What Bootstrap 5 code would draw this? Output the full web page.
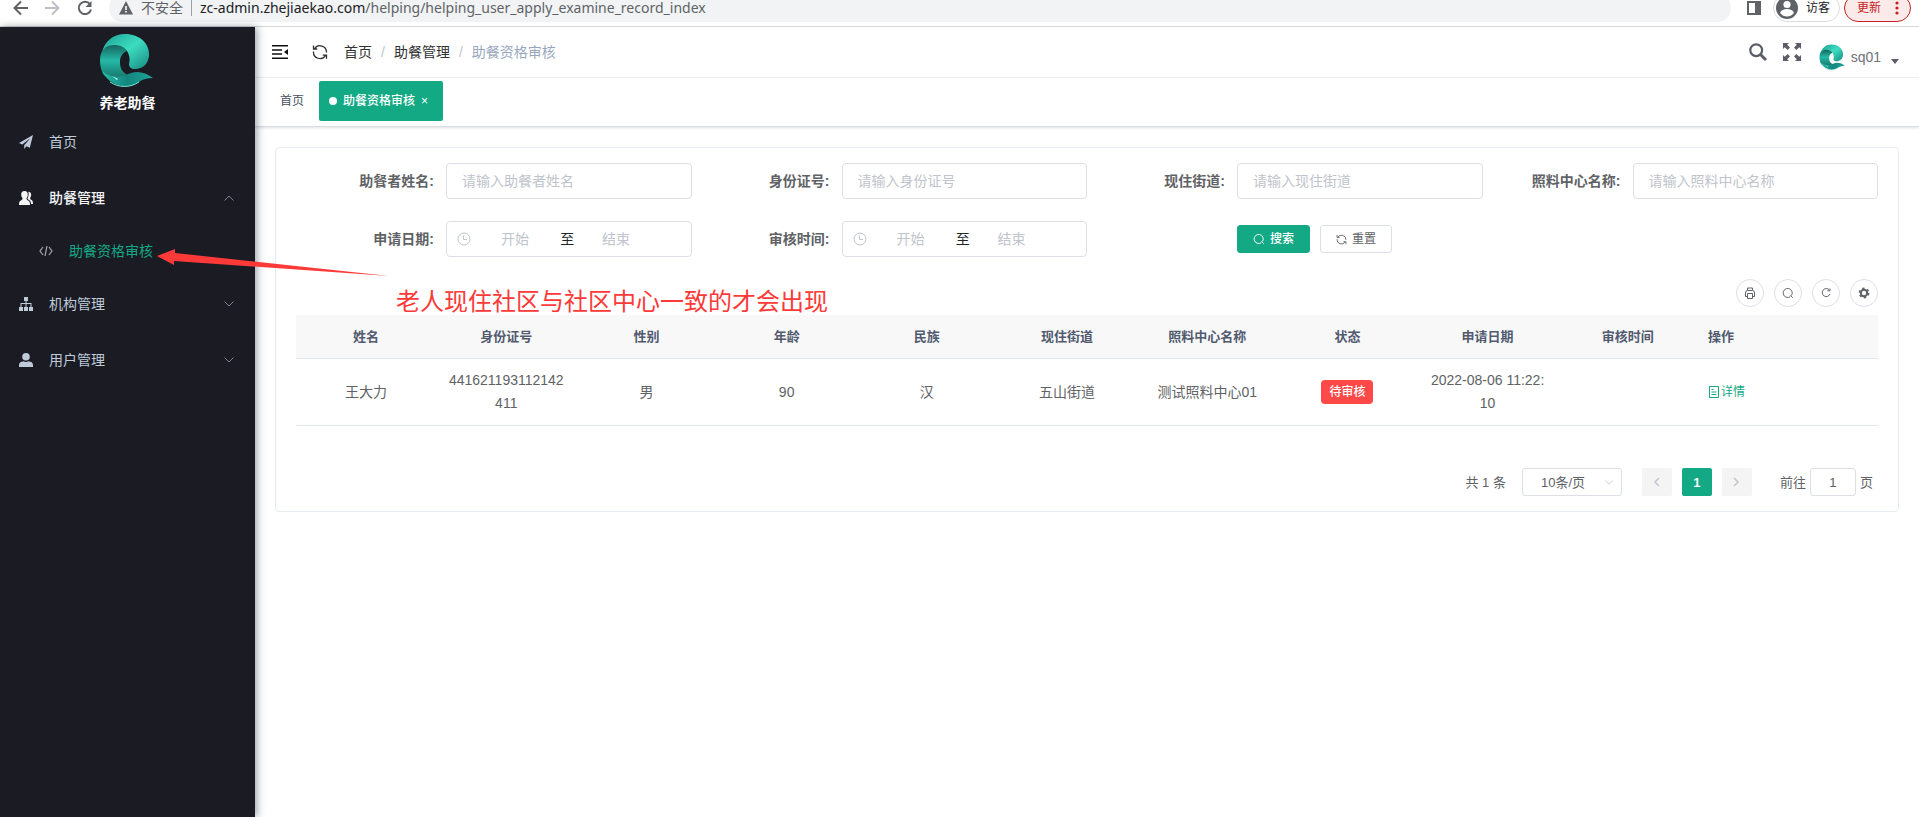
<!DOCTYPE html>
<html lang="zh-CN">
<head>
<meta charset="utf-8">
<meta name="viewport" content="width=device-width, initial-scale=1">
<title>助餐资格审核</title>
<link rel="stylesheet" href="https://cdn.jsdelivr.net/npm/bootstrap@5.3.0/dist/css/bootstrap.min.css">
<style>
:root { --brand: #13a985; --txt: #606266; --line: #dcdfe6; --soft: #e6ebf5; --ph: #c0c4cc; }
body { font-family: "Liberation Sans", "Noto Sans CJK SC", sans-serif; font-size: 14px; line-height: 23px; color: var(--txt); background: #fff; }
a { color: inherit; text-decoration: none; }
svg { display: block; flex: none; }
button { line-height: 1; }

/* browser toolbar */
.chrome { height: 27px; border-bottom: 1px solid #d5d6d8; overflow: hidden; }
.chrome-row { height: 28px; margin-top: -6px; padding: 0 8px 0 13px; }
.omni { height: 28px; border-radius: 14px; background: #f1f3f4; font-family: "Noto Sans", "Noto Sans CJK SC", sans-serif; font-size: 14px; line-height: 14px; padding-left: 10px; color: #5f6368; }
.omni b { font-weight: 400; color: #202124; }
.omni-sep { width: 1px; height: 16px; background: #9aa0a6; }
.chip { height: 28px; border-radius: 14px; border: 1px solid #dadce0; font-size: 12px; color: #202124; background: #fff; white-space: nowrap; padding: 0 9px 0 2px; gap: 8px; }
.chip-red { border-color: #c5221f; background: #fbeaea; color: #c5221f; padding: 0 11px 0 12px; gap: 14px; }

/* sidebar */
.side { width: 255px; background: #1b1b24; color: #bfcbd9; box-shadow: 2px 0 8px rgba(0,21,41,.4); z-index: 2; }
.side-brand { padding-top: 6px; gap: 5px; }
.side-title { font-weight: 700; color: #fff; line-height: 22px; }
.side a { height: 56px; padding: 0 20px 0 19px; gap: 16px; }
.side a.is-open { color: #f4f4f5; font-weight: 500; }
.side a.side-sub { height: 50px; padding-left: 39px; color: var(--brand); }
.side-sub svg { color: #a9aab0; }
.side .arrow { color: #7d828c; }

/* top bars */
.topbar { height: 51px; border-bottom: 1px solid #f0f1f2; padding: 0 20px 0 17px; color: #303133; }
.crumbs { --bs-breadcrumb-divider-color: #c0c4cc; --bs-breadcrumb-item-padding-x: 9px; }
.crumbs .active { color: #97a8be; }
.user-name { color: #6f7278; gap: 6px; padding: 10px 0 0 2px; }
.caret { border: 4px solid transparent; border-top: 5px solid #5a5e66; border-bottom: 0; }
.tabs { height: 49px; border-bottom: 1px solid #d8dce5; box-shadow: 0 1px 3px rgba(0,0,0,.12); padding: 3px 10px 0; font-size: 12px; color: #495060; }
.tabs a { height: 40px; padding: 0 15px; }
.tabs a.on { background: var(--brand); color: #fff; border-radius: 2px; padding: 0 15px 0 10px; font-weight: 500; gap: 6px; }
.dot { width: 8px; height: 8px; border-radius: 50%; background: #fff; }

/* panel */
.content { padding: 20px; }
.panel { border: 1px solid var(--soft); border-radius: 4px; padding: 15px 20px; }
.f-rows { row-gap: 22px; }
.f-label { width: 150px; padding-right: 12px; font-weight: 700; text-align: right; flex: none; }
.f-ctl, .f-range { height: 36px; border: 1px solid var(--line); border-radius: 4px; font-size: 14px; color: var(--txt); box-shadow: none; }
.f-ctl { padding: 0 15px; }
.f-ctl::placeholder, .f-range input::placeholder { color: var(--ph); opacity: 1; }
.f-range { padding: 0 10px; min-width: 0; }
.f-range svg { color: var(--ph); margin-right: 5px; }
.f-range span { padding: 0 6px; }
.f-range input { border: 0; padding: 0; text-align: center; min-width: 0; width: 35%; background: transparent; }
.f-range span + input { width: 32%; }
.btn-mini { height: 28px; padding: 0 15px; font-size: 12px; border-radius: 3px; border: 1px solid var(--line); color: var(--txt); background: #fff; line-height: 1; gap: 5px; }
.btn-mini + .btn-mini { margin-left: 10px; }
.btn-mini.fill { background: var(--brand); border-color: var(--brand); color: #fff; }
.tools { gap: 10px; margin-top: 22px; }
.btn-round { width: 28px; height: 28px; border-radius: 50%; border: 1px solid var(--line); background: #fff; color: var(--txt); padding: 0; place-content: center; }
.grid-tbl { table-layout: fixed; --bs-table-color: #606266; }
.grid-tbl th, .grid-tbl td { padding: 10px; text-align: center; vertical-align: middle; border-bottom: 1px solid #dfe6ec; word-break: break-all; }
.grid-tbl th { background: #f8f8f9; color: #515a6e; font-weight: 700; font-size: 13px; }
.grid-tbl th:last-child, .grid-tbl td:last-child { width: 180px; text-align: left; }
.tag { display: inline-block; background: #ff4949; color: #fff; font-size: 12px; font-weight: 500; line-height: 24px; padding: 0 8px; border-radius: 4px; }
.detail { color: var(--brand); font-size: 12px; gap: 1px; }
.pager { font-size: 13px; margin-top: 42px; padding-right: 5px; }
.pager select { appearance: none; height: 28px; width: 100px; border: 1px solid var(--line); border-radius: 3px; padding: 0 18px; font-size: 13px; color: var(--txt); background: #fff; }
.pages { gap: 10px; }
.pg { width: 30px; height: 28px; border: 0; border-radius: 2px; background: #f4f4f5; color: var(--ph); padding: 0; font-weight: 700; place-content: center; }
.pg.on { background: var(--brand); color: #fff; }
.pager input { width: 46px; height: 28px; border: 1px solid var(--line); border-radius: 3px; text-align: center; color: var(--txt); padding: 0; }
.sel-arrow { top: 11px; right: 8px; color: var(--ph); pointer-events: none; }

/* red annotation drawn over the page */
.note { left: 396px; top: 285px; font-size: 24px; line-height: 34px; color: #fe3a38; z-index: 5; white-space: nowrap; }
.note-arrow { left: 157px; top: 248px; z-index: 5; }
</style>
</head>
<body class="position-relative min-vh-100 d-flex flex-column overflow-x-hidden">

<svg width="0" height="0" class="position-absolute" aria-hidden="true">
  <defs>
    <linearGradient id="gTop" x1="0" y1="0" x2="1" y2="1"><stop offset="0" stop-color="#1b9f93"/><stop offset=".5" stop-color="#3ddcc0"/><stop offset="1" stop-color="#178a82"/></linearGradient>
    <linearGradient id="gLeft" x1="0" y1="0" x2="0" y2="1"><stop offset="0" stop-color="#16655d"/><stop offset=".45" stop-color="#24b9a6"/><stop offset="1" stop-color="#187268"/></linearGradient>
    <linearGradient id="gTail" x1="0" y1="0" x2="1" y2="0"><stop offset="0" stop-color="#27bca9"/><stop offset=".5" stop-color="#15857f"/><stop offset="1" stop-color="#1da69a"/></linearGradient>
    <symbol id="logo" viewBox="0 0 54 54">
      <path fill="url(#gTop)" d="M3 20C5 8 15 1 26 1c15 0 25 10 24 22-1 8-6 13-14 13-4 0-6-2-6-5 1-4 1-8-2-13C22 11 11 11 3 20z"/>
      <path fill="url(#gLeft)" d="M1 27C1 16 8 12 15 12c6 0 10 2 13 6-5 2-7 6-7 11 0 7 3 11 8 13l-9 4C14 47 7 45 4 41 2 37 1 32 1 27z"/>
      <path fill="url(#gTail)" d="M3 38c8 7 18 7 26 3 9-4 17-2 25 4-6 0-10 1-14 4-11 8-29 5-37-11z"/>
      <path fill="none" stroke="#6fe6d2" stroke-width="1" d="M11 49c9 6 20 6 29 0"/>
      <path fill="#b7fff2" d="M13 43l6 3-1 1z"/>
    </symbol>
    <symbol id="down" viewBox="0 0 12 8"><path fill="none" stroke="currentColor" stroke-width="1" d="M1.500 1.500L6 6l4.500-4.500"/></symbol>
    <symbol id="cycle" viewBox="0 0 16 16"><path fill="none" stroke="currentColor" stroke-width="1.300" d="M2.500 4.800A6.500 6.500 0 0 1 14.500 8.500M13.500 11.500A6.500 6.500 0 0 1 1.500 7.500M1.500 1.500V5h3.700M14.500 14.800v-3.600h-3.700"/></symbol>
    <symbol id="lens" viewBox="0 0 14 14"><path fill="none" stroke="currentColor" stroke-width="1.100" d="M9.700 11.300A5.300 5.300 0 1 1 11 10M9.800 9.800l2.800 2.800"/></symbol>
    <symbol id="clock" viewBox="0 0 14 14"><circle cx="7" cy="7" r="6" fill="none" stroke="currentColor"/><path fill="none" stroke="currentColor" d="M6.500 3.500V7.500H10"/></symbol>
  </defs>
</svg>

<div class="chrome flex-shrink-0">
  <div class="chrome-row d-flex align-items-center">
    <div class="d-flex gap-3 me-3">
      <svg width="16" height="16" fill="none" stroke="#5f6368" stroke-width="2"><path d="M15 8H2M8 1.500L1.500 8 8 14.500"/></svg>
      <svg width="16" height="16" fill="none" stroke="#bdc1c6" stroke-width="2"><path d="M0 8h13M7 1.500L13.500 8 7 14.500"/></svg>
      <svg width="16" height="16" fill="none" stroke="#5f6368" stroke-width="2"><path d="M13 4.200A6.200 6.200 0 1 0 14 9.500"/><path fill="#5f6368" stroke="none" d="M14.500 1v6h-6z"/></svg>
    </div>
    <div class="omni flex-grow-1 d-flex align-items-center">
      <svg width="14" height="14" class="me-2"><path fill="#5f6368" d="M7 0l7 13.500H0z"/><path fill="#fff" d="M6.200 5h1.600v4H6.200zM6.200 10h1.600v1.600H6.200z"/></svg>
      <span>不安全</span>
      <span class="omni-sep mx-2"></span>
      <span><b>zc-admin.zhejiaekao.com</b>/helping/helping_user_apply_examine_record_index</span>
    </div>
    <svg width="14" height="14" class="ms-3 me-2"><path fill="#5f6368" d="M0 0h14v14H0zM2 2v10h6V2z" fill-rule="evenodd"/></svg>
    <button class="chip d-flex align-items-center ms-1 me-1">
      <svg width="22" height="22" viewBox="0 0 22 22"><circle cx="11" cy="11" r="11" fill="#5f6368"/><circle cx="11" cy="7.500" r="3.600" fill="#fff"/><path fill="#fff" d="M4 16c1-3 4-4 7-4s6 1 7 4c-2 2.500-4.500 3.500-7 3.500S6 18.500 4 16z"/></svg>访客
    </button>
    <button class="chip chip-red d-flex align-items-center">更新
      <svg width="4" height="14" fill="#c5221f"><circle cx="2" cy="2" r="1.600"/><circle cx="2" cy="7" r="1.600"/><circle cx="2" cy="12" r="1.600"/></svg>
    </button>
  </div>
</div>

<div class="d-flex flex-grow-1">
  <aside class="side flex-shrink-0 position-relative">
    <div class="side-brand d-flex flex-column align-items-center">
      <svg width="54" height="54" class="me-1"><use href="#logo"/></svg>
      <div class="side-title">养老助餐</div>
    </div>
    <nav>
      <a href="#" class="d-flex align-items-center">
        <svg width="14" height="14" fill="currentColor"><path d="M14 0L0 8l3.300 1.400L11.500 3 5.200 10.300V14l2.200-2.700 3.400 1.400z"/></svg>首页</a>
      <a href="#" class="d-flex align-items-center is-open">
        <svg width="14" height="14" fill="currentColor"><path d="M5.500 0C8 0 9 2 8.800 4 8.700 5.500 8 6.500 7.500 7.200c0 1.500.8 1.800 2 2.500C10.500 10.300 11 11 11 14H0c0-3 .5-3.700 1.500-4.300 1.200-.7 2-1 2-2.500C3 6.500 2.300 5.500 2.200 4 2 2 3 0 5.500 0zM9.300.8c2 0 3 1.500 2.900 3.200-.1 1.300-.6 2.200-1.100 2.900 0 1.300.6 1.500 1.500 2.100 1 .6 1.400 1.500 1.400 4h-2c-.1-2.500-.8-3.500-3-4.700-.4-.2-.6-.5-.4-.8C9.600 5.500 10 2.500 9.300.8z"/></svg>助餐管理
        <svg width="12" height="8" class="arrow ms-auto"><path fill="none" stroke="currentColor" d="M1.500 6.500L6 2l4.500 4.500"/></svg></a>
      <a href="#" class="d-flex align-items-center side-sub">
        <svg width="14" height="10" fill="none" stroke="currentColor" stroke-width="1.200"><path d="M4 1L1 5l3 4M10 1l3 4-3 4M8 0L6 10"/></svg>助餐资格审核</a>
      <a href="#" class="d-flex align-items-center">
        <svg width="14" height="14" fill="currentColor"><path d="M5 0h4v4H7.500v2H12.500v4H14v4h-4v-4h1.500V7h-4v3H9v4H5v-4h1.500V7h-4v3H4v4H0v-4h1.500V6h5V4H5z"/></svg>机构管理
        <svg width="12" height="8" class="arrow ms-auto"><use href="#down"/></svg></a>
      <a href="#" class="d-flex align-items-center">
        <svg width="14" height="14" fill="currentColor"><circle cx="7" cy="3.800" r="3.800"/><path d="M0 14v-2c0-2.500 2-3.200 4.500-3.700 1.500.9 3.500.9 5 0C12 8.800 14 9.500 14 12v2z"/></svg>用户管理
        <svg width="12" height="8" class="arrow ms-auto"><use href="#down"/></svg></a>
    </nav>
  </aside>

  <main class="flex-grow-1" style="min-width:0">
    <header class="topbar d-flex align-items-center">
      <svg width="16" height="14" fill="#111"><path d="M0 0h16v1.500H0zM0 4.200h10v1.500H0zM0 8.300h10v1.500H0zM0 12.500h16V14H0zM16 4v6l-4-3z"/></svg>
      <svg width="16" height="16" class="ms-4 me-3"><use href="#cycle"/></svg>
      <nav><ol class="breadcrumb crumbs mb-0">
        <li class="breadcrumb-item"><a href="#">首页</a></li>
        <li class="breadcrumb-item"><a href="#">助餐管理</a></li>
        <li class="breadcrumb-item active">助餐资格审核</li>
      </ol></nav>
      <div class="ms-auto d-flex align-items-center gap-3">
        <svg width="18" height="18" fill="none" stroke="#5a5e66"><circle cx="7.200" cy="7.200" r="5.900" stroke-width="2.200"/><path stroke-width="3" d="M11.500 11.500l5.500 5.500"/></svg>
        <svg width="18" height="18" fill="#5a5e66"><path d="M0 0h6L4.200 1.800 7 4.600 4.600 7 1.800 4.200 0 6zM18 0v6l-1.800-1.800L13.400 7 11 4.600l2.800-2.800L12 0zM0 18v-6l1.800 1.800L4.600 11 7 13.400l-2.800 2.800L6 18zM18 18h-6l1.800-1.800L11 13.400l2.400-2.400 2.800 2.800L18 12z"/></svg>
        <a href="#" class="d-flex align-items-center user-name">
          <svg width="26" height="26"><use href="#logo"/></svg>sq01<span class="caret ms-1 mt-2"></span></a>
      </div>
    </header>
    <nav class="tabs d-flex align-items-start">
      <a href="#" class="d-flex align-items-center">首页</a>
      <a href="#" class="d-flex align-items-center on"><span class="dot"></span>助餐资格审核<span>×</span></a>
    </nav>

    <section class="content">
      <div class="panel">
        <form>
          <div class="row row-cols-1 row-cols-md-2 row-cols-xl-4 g-0 f-rows">
            <div class="col d-flex align-items-center"><label class="f-label" for="f1">助餐者姓名:</label><input id="f1" class="form-control f-ctl" placeholder="请输入助餐者姓名"></div>
            <div class="col d-flex align-items-center"><label class="f-label" for="f2">身份证号:</label><input id="f2" class="form-control f-ctl" placeholder="请输入身份证号"></div>
            <div class="col d-flex align-items-center"><label class="f-label" for="f3">现住街道:</label><input id="f3" class="form-control f-ctl" placeholder="请输入现住街道"></div>
            <div class="col d-flex align-items-center"><label class="f-label" for="f4">照料中心名称:</label><input id="f4" class="form-control f-ctl" placeholder="请输入照料中心名称"></div>
            <div class="col d-flex align-items-center"><label class="f-label" for="f5">申请日期:</label>
              <div class="f-range d-flex align-items-center flex-grow-1"><svg width="14" height="14"><use href="#clock"/></svg><input id="f5" placeholder="开始"><span class="text-dark">至</span><input aria-label="申请日期结束" placeholder="结束"></div></div>
            <div class="col d-flex align-items-center"><label class="f-label" for="f6">审核时间:</label>
              <div class="f-range d-flex align-items-center flex-grow-1"><svg width="14" height="14"><use href="#clock"/></svg><input id="f6" placeholder="开始"><span class="text-dark">至</span><input aria-label="审核时间结束" placeholder="结束"></div></div>
            <div class="col d-flex align-items-center"><span class="f-label"></span>
              <button type="button" class="btn-mini fill d-flex align-items-center fw-medium"><svg width="12" height="12"><use href="#lens"/></svg>搜索</button>
              <button type="reset" class="btn-mini d-flex align-items-center"><svg width="11" height="11"><use href="#cycle"/></svg>重置</button></div>
          </div>
        </form>

        <div class="d-flex justify-content-end mb-2 tools">
          <button class="btn-round d-grid" aria-label="打印"><svg width="12" height="12" fill="none" stroke="currentColor"><path d="M3.500 3V1h5v2M3 9.500H1.500V6q0-2.500 2-2.500h5q2 0 2 2.500v3.500H9M3.500 6.500h5v5h-5z"/></svg></button>
          <button class="btn-round d-grid" aria-label="搜索"><svg width="12" height="12"><use href="#lens"/></svg></button>
          <button class="btn-round d-grid" aria-label="刷新"><svg width="12" height="12" fill="none" stroke="currentColor"><path d="M9.500 3.200A4 4 0 1 0 10 7M10 1.500v2.300H7.500"/></svg></button>
          <button class="btn-round d-grid" aria-label="设置"><svg width="12" height="12" fill="none" stroke="currentColor"><circle cx="6" cy="6" r="3.200" stroke-width="2"/><circle cx="6" cy="6" r="4.600" stroke-width="1.600" stroke-dasharray="2.400 2.417"/></svg></button>
        </div>

        <table class="table grid-tbl mb-0">
          <thead><tr><th>姓名</th><th>身份证号</th><th>性别</th><th>年龄</th><th>民族</th><th>现住街道</th><th>照料中心名称</th><th>状态</th><th>申请日期</th><th>审核时间</th><th>操作</th></tr></thead>
          <tbody><tr><td>王大力</td><td>441621193112142411</td><td>男</td><td>90</td><td>汉</td><td>五山街道</td><td>测试照料中心01</td><td><span class="tag">待审核</span></td><td>2022-08-06 11:22:10</td><td></td>
            <td><a href="#" class="detail d-flex align-items-center"><svg width="12" height="12" fill="none" stroke="currentColor"><path d="M1.500.5h9v11h-9zM3.500 3.500h2M3.500 6h5M3.500 8.500h5"/></svg>详情</a></td></tr></tbody>
        </table>

        <div class="pager d-flex align-items-center justify-content-end">
          <span>共 1 条</span>
          <div class="position-relative mx-3"><select aria-label="每页条数"><option>10条/页</option></select><svg width="10" height="7" class="position-absolute sel-arrow"><use href="#down"/></svg></div>
          <div class="d-flex ms-1 pages">
            <button class="pg d-grid" aria-label="上一页"><svg width="7" height="10" fill="none" stroke="currentColor" stroke-width="1.500"><path d="M6 1L2 5l4 4"/></svg></button>
            <button class="pg on">1</button>
            <button class="pg d-grid" aria-label="下一页"><svg width="7" height="10" fill="none" stroke="currentColor" stroke-width="1.500"><path d="M1 1l4 4-4 4"/></svg></button>
          </div>
          <label for="go" class="ms-4 ps-1 me-1">前往</label><input id="go" value="1"><span class="ms-1">页</span>
        </div>
      </div>
    </section>
  </main>
</div>

<svg class="position-absolute note-arrow" width="232" height="30"><path fill="#fe3a38" d="M0 8L18 1v4L232 28 17 13v4z"/></svg>
<div class="position-absolute note">老人现住社区与社区中心一致的才会出现</div>

<script src="https://cdn.jsdelivr.net/npm/bootstrap@5.3.0/dist/js/bootstrap.bundle.min.js"></script>
</body>
</html>
